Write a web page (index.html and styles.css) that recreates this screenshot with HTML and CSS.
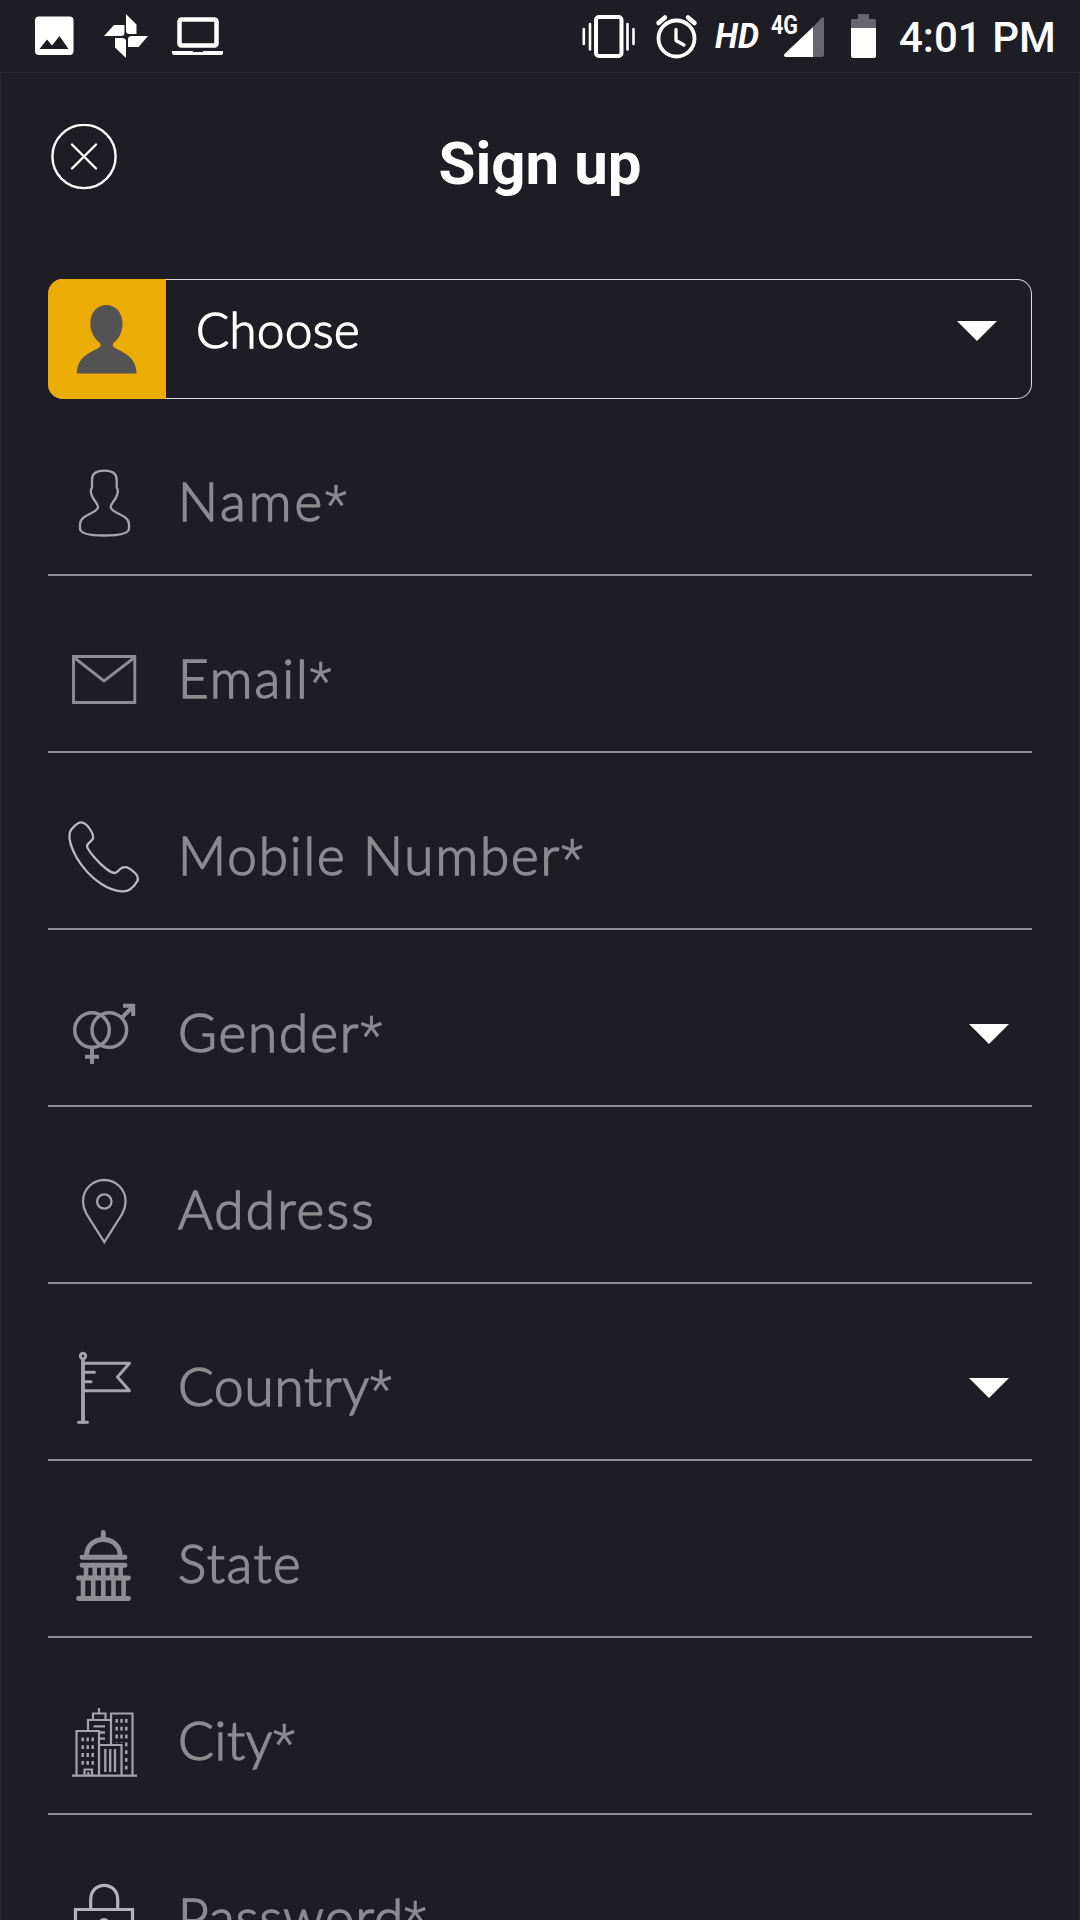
FILE: index.html
```
<!DOCTYPE html>
<html lang="en">
<head>
    <meta charset="UTF-8">
    <meta name="viewport" content="width=device-width, initial-scale=1.0">
    <title>Sign up</title>
    <link rel="stylesheet" href="styles.css">
</head>
<body>
    <div class="status-bar">
        <div class="status-left">
            <svg class="st-image" viewBox="35 0 39 72" width="39" height="72">
                <path fill="#fff" fill-rule="evenodd" d="M39 16.5h30.500a4 4 0 0 1 4 4v30.500a4 4 0 0 1-4 4h-30.500a4 4 0 0 1-4-4v-30.500a4 4 0 0 1 4-4zM39.500 49h29l-9-13-7.500 9.500-5-6z"/>
            </svg>
            <svg class="st-fan" viewBox="104 0 44 72" width="44" height="72">
                <path fill="#fff" d="M126 14l10.500 10.500v9.500h-7q-3.500 0-3.500-3.500zM104 36l10-11h10.500v7.500q0 3.500-3.500 3.500zM148 36l-9.500 11h-10.500v-7.500q0-3.500 3.500-3.500zM126 58l-11-10.500v-9.500h7.500q3.500 0 3.500 3.500z"/>
            </svg>
            <svg class="st-laptop" viewBox="172 0 51 72" width="51" height="72">
                <rect x="179.500" y="19.500" width="37" height="26" rx="2" fill="none" stroke="#fff" stroke-width="4.500"/>
                <path fill="#fff" d="M172 51h21v1h10v-1h20v2q0 2-2 2h-47q-2 0-2-2z"/>
            </svg>
        </div>
        <div class="status-right">
            <svg class="st-vibrate" viewBox="582 0 54 72" width="54" height="72">
                <rect x="596" y="17" width="25.500" height="39" rx="3" fill="none" stroke="#fff" stroke-width="4"/>
                <path stroke="#fff" stroke-width="2.600" stroke-linecap="round" d="M583.800 29v15M590 24v25.500M627.500 24v25.500M633.500 29v15"/>
            </svg>
            <svg class="st-alarm" viewBox="655 0 43 72" width="43" height="72">
                <circle cx="676.500" cy="38.500" r="18" fill="none" stroke="#fff" stroke-width="3.800"/>
                <path fill="none" stroke="#fff" stroke-width="3.300" stroke-linecap="round" stroke-linejoin="round" d="M676 29.500v11l8 4.500"/>
                <path stroke="#fff" stroke-width="4.500" stroke-linecap="round" d="M658.500 23l6.500-5.500M688 17.500l6.500 5.500"/>
            </svg>
            <svg class="st-hd" viewBox="714 0 46 72" width="46" height="72">
                <text x="715" y="48" font-size="35" font-style="italic" textLength="44" lengthAdjust="spacingAndGlyphs">HD</text>
            </svg>
            <svg class="st-signal" viewBox="770 0 55 72" width="55" height="72">
                <path fill="#67666b" d="M813 27l9-9.500q2-1 2 1v36q0 2.500-2.500 2.500h-8.500z"/>
                <path fill="#fff" d="M813 27v30h-27.500q-2.500-1-1-3z"/>
                <text x="771" y="34" font-size="26" textLength="27" lengthAdjust="spacingAndGlyphs">4G</text>
            </svg>
            <svg class="st-battery" viewBox="851 0 25 72" width="25" height="72">
                <path fill="#67666b" d="M851 28v-7.500q0-1.500 1.500-1.500h5.500v-5h11v5h5.500q1.500 0 1.500 1.500v7.500z"/>
                <path fill="#fff" d="M851 28h25v28q0 2-2 2h-21q-2 0-2-2z"/>
            </svg>
            <span class="clock">4:01 PM</span>
        </div>
    </div>

    <div class="screen">
        <div class="header">
            <svg class="close" viewBox="0 0 66 66" width="66" height="66">
                <circle cx="33" cy="32.500" r="31.600" />
                <path d="M21 20.500l24 24M45 20.500l-24 24"/>
            </svg>
            <h1>Sign up</h1>
        </div>

        <div class="choose">
            <div class="choose-icon">
                <svg viewBox="0 0 118 120" width="118" height="120">
                    <path fill="#535353" d="M58.300 26c9.500 0 16.200 8 16.200 18.500 0 9-4.200 16-9.500 20v2.500c3 5 23.500 7 23.500 27.500h-59.500c0-20.500 20.500-22.500 23.500-27.500v-2.500c-5.300-4-10.200-11-10.200-20 0-10.500 6.500-18.500 16-18.500z"/>
                </svg>
            </div>
            <span class="choose-text">Choose</span>
            <svg class="arrow" viewBox="0 0 40 20" width="40" height="20"><path d="M0 0h40l-20 20z"/></svg>
        </div>

        <div class="field name">
            <svg class="icon" viewBox="0 0 80 80" width="80" height="80">
                <path stroke="#a5a4a8" stroke-width="2.300" d="M40.300 7.700c-8 0-12.300 3-12.300 9v8c-2 2-1 7 .5 9.300 1.500 4 5.500 6.500 5.500 10 0 6.500-18 7-18 17.500v4c0 5 9 7 24.300 7s24.700-2 24.700-7v-4c0-10.500-18.300-11-18.300-17.500 0-3.500 4-6 5.500-10 1.500-2.300 2.500-7.300.5-9.300v-8c0-6-4.400-9-12.400-9z"/>
            </svg>
            <span class="label">Name<span class="req">*</span></span>
        </div>

        <div class="field email">
            <svg class="icon" viewBox="0 0 80 80" width="80" height="80">
                <path stroke="#8e8d91" stroke-width="2.900" d="M9.500 16.500h61.300v46h-61.300zM10 17.500l30 23.500 30.500-23.500"/>
            </svg>
            <span class="label">Email<span class="req">*</span></span>
        </div>

        <div class="field mobile">
            <svg class="icon" viewBox="0 0 80 80" width="80" height="80">
                <path stroke="#bbbabf" stroke-width="2.300" d="M16.700 5.300c-3 0-9.500 6-10.900 10-1.300 6 .7 14.700 7.200 26 6 10 14.500 19.200 24 25.500 8 5.200 14.500 7.200 20.400 7.500 4.500.3 6.500-.3 8.500-1.800 3-2.200 6.300-6 7.600-8.700 1-3-.3-5.800-3-8.300-3-3-5-4.300-7.500-5.200-3-.7-5 0-6.900 1.700-2 2-3.500 4-5.600 4-3-.3-5.500-2-8-4-4.500-3.500-8-6.800-11.500-11-4-4.500-7-8-8-11.500-.3-3 4.500-5 6-8 .8-3-1-6-2.500-8.500-2.500-4.200-5.500-7.700-9.800-7.700z"/>
            </svg>
            <span class="label">Mobile Number<span class="req">*</span></span>
        </div>

        <div class="field gender">
            <svg class="icon" viewBox="0 0 80 80" width="80" height="80">
                <g stroke="#8e8d91">
                    <circle cx="28" cy="36" r="17.300" stroke-width="3.500"/>
                    <circle cx="45.300" cy="36" r="17.300" stroke-width="3.500"/>
                    <path stroke-width="4" d="M28 54v16M21 62.700h14M57.500 24l12-12M59 11.800h10.200v10.200"/>
                </g>
            </svg>
            <span class="label">Gender<span class="req">*</span></span>
            <svg class="arrow" viewBox="0 0 40 20" width="40" height="20"><path d="M0 0h40l-20 20z"/></svg>
        </div>

        <div class="field address">
            <svg class="icon" viewBox="0 0 80 80" width="80" height="80">
                <path stroke="#a5a4a8" stroke-width="2.300" d="M40.300 9c-12 0-21.300 9.500-21.300 21.500 0 4.500 1 8 3.500 12.500l17.800 28 17.800-28c2.500-4.500 3.500-8 3.500-12.500 0-12-9.300-21.500-21.300-21.500z"/>
                <circle cx="40.300" cy="30.500" r="7.200" stroke="#a5a4a8" stroke-width="2.300"/>
            </svg>
            <span class="label">Address</span>
        </div>

        <div class="field country">
            <svg class="icon" viewBox="0 0 80 80" width="80" height="80">
                <g stroke="#a5a4a8" stroke-width="3" stroke-linecap="round" stroke-linejoin="round">
                    <circle cx="19" cy="8" r="2.700"/>
                    <path stroke-width="3.800" d="M19 12v62"/>
                    <path d="M14.500 74.300h9M19 15.300h46.500l-12 13.700 12 13.700h-46.500M19 24.300h11.500M19 33.700h8"/>
                </g>
            </svg>
            <span class="label">Country<span class="req">*</span></span>
            <svg class="arrow" viewBox="0 0 40 20" width="40" height="20"><path d="M0 0h40l-20 20z"/></svg>
        </div>

        <div class="field state">
            <svg class="icon" viewBox="0 0 80 80" width="80" height="80">
                <g stroke="#8e8d91" stroke-width="4.900" stroke-linecap="round">
                    <path d="M39.300 7.500v6M22.500 31c0-10 7-16.500 16.800-16.500s16.800 6.500 16.800 16.500M18 32.300h43M18 40.300h43M14.500 53h50M14.500 73.500h50"/>
                    <path stroke-linecap="butt" stroke-width="4.600" d="M22 40v13M30.700 40v13M39.300 40v13M48 40v13M56.700 40v13M19 53v20M29.200 53v20M39.300 53v20M49.500 53v20M59.600 53v20"/>
                </g>
            </svg>
            <span class="label">State</span>
        </div>

        <div class="field city">
            <svg class="icon" viewBox="0 0 80 80" width="80" height="80">
                <g stroke="#a5a4a8" stroke-width="2.200">
                    <path d="M8 73.700h65M12.500 73v-44h22.500v44M24 28v-10h22M29 17v-5.500h12.500v5.500M35 11v-5M47 42v-30.500h21.500v62M35 43h22.500v30M20.500 73v-5.500h7.500v5.500M24.300 73v-3"/>
                    <path stroke-width="2.300" d="M29.500 24.300h11.500M36 30.500h5M36 36.700h5M41.300 47v23M46.200 47v23M51 47v23"/>
                    <!-- windows -->
                    <path stroke-width="2.500" stroke-dasharray="3.800 4" d="M18.700 35.500v27.200M23.700 35.500v27.200M28.700 35.500v27.200M52.700 17v24M57.500 17v24M62.300 17v50.600"/>
                </g>
            </svg>
            <span class="label">City<span class="req">*</span></span>
        </div>

        <div class="field password">
            <svg class="icon" viewBox="0 0 80 80" width="80" height="80">
                <g stroke="#b4b3b8" stroke-width="3.200">
                    <path d="M26.700 29.500v-9c0-8 5.500-14.200 13.500-14.200s13.500 6.200 13.500 14.200v9M11.500 30.500h57v48h-57z"/>
                    <circle cx="40" cy="44.500" r="4"/>
                </g>
            </svg>
            <span class="label">Password<span class="req">*</span></span>
        </div>
    </div>
</body>
</html>
```
FILE: styles.css
```
* {
    box-sizing: border-box;
}

body {
    margin: 0;
    height: 1920px;
    overflow: hidden;
    background-color: #1e1d23;
    color: #fff;
    font-family: Lato, sans-serif;
}

svg {
    display: block;
    flex: none;
}

/* status bar */
.status-bar {
    display: flex;
    justify-content: space-between;
    height: 72px;
    padding: 0 24px 0 35px;
    font-family: Roboto, sans-serif;
}

.status-left,
.status-right {
    display: flex;
}

.status-bar text {
    fill: #fff;
    font-weight: 700;
}

.st-fan { margin-left: 30px; }
.st-laptop { margin-left: 24px; }
.st-alarm { margin-left: 19px; }
.st-hd { margin-left: 16px; }
.st-signal { margin-left: 10px; }
.st-battery { margin-left: 26px; }

.clock {
    width: 157px;
    margin-left: 23px;
    font-size: 42px;
    font-weight: 500;
    line-height: 75px;
    white-space: nowrap;
}

/* page */
.screen {
    height: 1848px;
    padding: 0 47px;
    border: 1px solid #29282e;
    border-bottom: none;
    overflow: hidden;
}

.header {
    display: grid;
    grid-template-columns: 66px 1fr 66px;
    height: 206px;
    padding: 0 3px;
}

.close {
    margin-top: 51px;
    fill: none;
    stroke: #fff;
    stroke-width: 2.4;
    stroke-linecap: round;
}

h1 {
    margin: 56px 0 0;
    font: 700 60px/70px Roboto, sans-serif;
    text-align: center;
}

.choose {
    display: flex;
    align-items: flex-start;
    height: 120px;
    border: 1px solid #dcdcde;
    border-left: none;
    border-radius: 15px;
}

.choose-icon {
    width: 118px;
    height: 120px;
    margin-top: -1px;
    background-color: #ebac06;
    border-radius: 15px 0 0 15px;
}

.choose-text {
    margin: 20px 0 0 30px;
    font-size: 49px;
    font-weight: 300;
    line-height: 59px;
    letter-spacing: 0.5px;
    -webkit-text-stroke: 1.4px currentColor;
}

.arrow {
    margin: 94px 23px 0 auto;
    fill: #fff;
}

.choose .arrow {
    margin: 41px 34px 0 auto;
}

.field {
    display: flex;
    align-items: flex-start;
    height: 177px;
    padding-left: 16px;
    border-bottom: 2px solid #8e8d91;
}

.icon {
    margin-top: 64px;
    fill: none;
}

.label {
    margin: 70px 0 0 34px;
    color: #8c8b8f;
    font-size: 53px;
    font-weight: 300;
    line-height: 64px;
    white-space: nowrap;
    -webkit-text-stroke: 1.5px currentColor;
}

.req {
    font-family: Roboto, sans-serif;
    font-size: 51px;
    line-height: 0;
    letter-spacing: 0;
    vertical-align: -1px;
    -webkit-text-stroke-width: 0.6px;
}

.name .label { letter-spacing: 3px; }
.email .label { letter-spacing: 2px; }
.mobile .label { letter-spacing: 1.9px; }
.gender .label { letter-spacing: 1.9px; }
.address .label { letter-spacing: 2.2px; }
.country .label { letter-spacing: 0.8px; }
.state .label { letter-spacing: 1.6px; }
.city .label { letter-spacing: 0.7px; }
.password .label { letter-spacing: 1.2px; }
```
